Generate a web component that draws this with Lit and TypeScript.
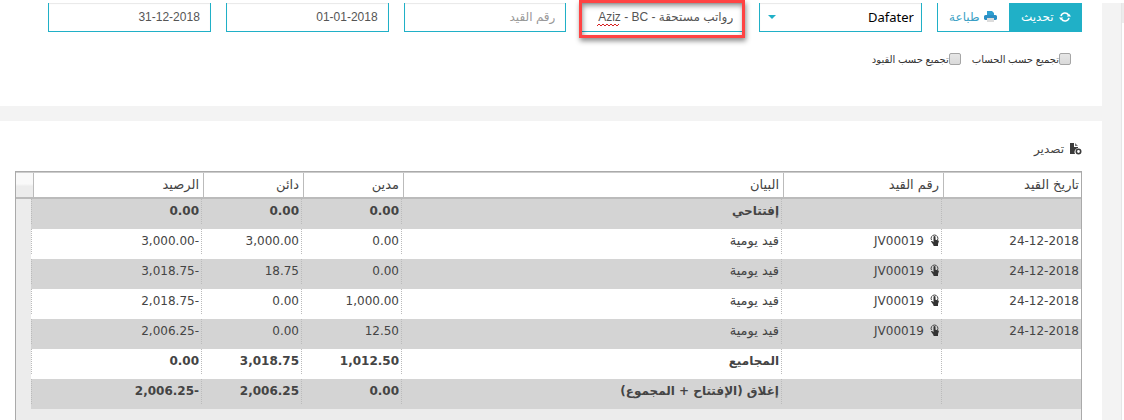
import { LitElement, html, css, svg, nothing } from "lit";
import { customElement } from "lit/decorators.js";
import { classMap } from "lit/directives/class-map.js";

interface Entry {
  date?: string;
  ref?: string;
  text: string;
  debit: string;
  credit: string;
  balance: string;
  bold?: boolean;
}

const ENTRIES: Entry[] = [
  { text: "إفتتاحي", debit: "0.00", credit: "0.00", balance: "0.00", bold: true },
  { date: "24-12-2018", ref: "JV00019", text: "قيد يومية", debit: "0.00", credit: "3,000.00", balance: "-3,000.00" },
  { date: "24-12-2018", ref: "JV00019", text: "قيد يومية", debit: "0.00", credit: "18.75", balance: "-3,018.75" },
  { date: "24-12-2018", ref: "JV00019", text: "قيد يومية", debit: "1,000.00", credit: "0.00", balance: "-2,018.75" },
  { date: "24-12-2018", ref: "JV00019", text: "قيد يومية", debit: "12.50", credit: "0.00", balance: "-2,006.25" },
  { text: "المجاميع", debit: "1,012.50", credit: "3,018.75", balance: "0.00", bold: true },
  { text: "إغلاق (الإفتتاح + المجموع)", debit: "0.00", credit: "2,006.25", balance: "-2,006.25", bold: true },
];

const HEADINGS = ["تاريخ القيد", "رقم القيد", "البيان", "مدين", "دائن", "الرصيد"];

const refreshIcon = html`<svg class="icon" width="12" height="12" viewBox="0 0 12 12" aria-hidden="true">
  ${svg`<path fill="none" stroke="currentColor" stroke-width="1.500" d="M2 5.200A4.100 4.100 0 0 1 9.500 4M10 6.800A4.100 4.100 0 0 1 2.500 8"/><path fill="currentColor" d="M7.800 5.500H12L10 2.800zM4.200 6.500H0l2 2.700z"/>`}
</svg>`;

const printIcon = html`<svg class="icon" width="13" height="12" viewBox="0 0 13 12" aria-hidden="true">
  ${svg`<path fill="#2f9fd0" d="M3 0h5l2 2v2H3z"/><path fill="#2b8fc4" d="M1.500 4h10a1.500 1.500 0 0 1 1.500 1.500V8l-1 1h-2V7H3v2H1L0 8V5.500A1.500 1.500 0 0 1 1.500 4z"/><path fill="#dcdcdc" d="M3 7h7v4H3z"/>`}
</svg>`;

const exportIcon = html`<svg class="icon" width="13" height="12" viewBox="0 0 13 12" aria-hidden="true">
  ${svg`<path fill="#3b3b3b" d="M1 0h4v4h4v1a4 4 0 0 0-3 6H1z"/><path fill="#777" d="M6 0l3 3H6z"/><circle cx="9.500" cy="8.500" r="2.200" fill="none" stroke="#3b3b3b" stroke-width="1.600"/>`}
</svg>`;

const tapIcon = html`<svg class="icon" width="9" height="12" viewBox="0 0 9 12" aria-hidden="true">
  ${svg`<path fill="none" stroke="#4a4a4a" d="M1.500 6A3.400 3.400 0 1 1 7.500 6"/><path fill="#333" d="M3.500 3a1 1 0 0 1 2 0v2.700l2.500.5c.600.200.900.500.900 1.100L8 10v2H3.500v-1L1 7.500c.5-.6 1.200-.5 1.700 0l.8.800z"/>`}
</svg>`;

@customElement("ledger-filters")
export class LedgerFilters extends LitElement {
  static styles = css`
    :host {
      display: block;
      background: #fff;
      padding: 3px 20px 38px 48px;
    }
    .fields {
      display: grid;
      grid-template-columns: 145px repeat(5, minmax(0, 1fr));
      gap: 15px;
    }
    .actions {
      display: flex;
    }
    button {
      box-sizing: border-box;
      height: 29px;
      border: 1px solid #20b0c7;
      border-top: 0;
      padding: 0;
      display: flex;
      align-items: center;
      justify-content: center;
      gap: 5px;
      flex: 1;
      font: 12px/18px "Noto Sans", "DejaVu Sans", sans-serif;
      color: #3a9fc5;
      background: #fff;
    }
    .primary {
      color: #fff;
      background: #20b0c7;
    }
    .field {
      position: relative;
    }
    .control {
      box-sizing: border-box;
      display: block;
      width: 100%;
      height: 29px;
      margin: 0;
      padding: 0 10px;
      border: 1px solid #20b0c7;
      border-top: 0;
      border-radius: 0;
      background: #fff;
      box-shadow: inset 0 1px 1px #e8e8e8;
      font: 12px/18px "Liberation Sans", "DejaVu Sans", sans-serif;
      color: #555;
      outline: 0;
    }
    .control::placeholder {
      color: #999;
      opacity: 1;
    }
    select.control {
      appearance: none;
      padding: 0 7px;
      font: 13px/18px "Noto Sans", "DejaVu Sans", sans-serif;
      color: #000;
    }
    .caret {
      position: absolute;
      left: 9px;
      top: 12px;
      border: 4px solid transparent;
      border-top-color: #20b0c7;
      border-bottom: 0;
      pointer-events: none;
    }
    .marker {
      position: absolute;
      inset: -3px -1px -6px -2px;
      border: 3px solid #ff4343;
      box-shadow: 1px 3px 5px rgba(0, 0, 0, 0.45), inset 1px 3px 5px rgba(0, 0, 0, 0.4);
      pointer-events: none;
    }
    .squiggle {
      position: absolute;
      left: 16px;
      top: 20px;
      pointer-events: none;
    }
    .options {
      display: flex;
      gap: 11px;
      padding: 18px 11px 0;
    }
    .option {
      display: flex;
      align-items: center;
      font: 10px/18px "Noto Sans", "DejaVu Sans", sans-serif;
      color: #333;
    }
    .option input {
      appearance: none;
      box-sizing: border-box;
      width: 12px;
      height: 12px;
      margin: 0;
      border: 1px solid #a5a5a5;
      border-radius: 2px;
      background: linear-gradient(#e6e6e6, #dadada);
    }
  `;

  render() {
    return html`
      <div class="fields">
        <div class="actions">
          <button class="primary" type="button">${refreshIcon}<span>تحديث</span></button>
          <button type="button">${printIcon}<span>طباعة</span></button>
        </div>
        <div class="field">
          <select class="control" aria-label="الشركة"><option>Dafater</option></select>
          <span class="caret"></span>
        </div>
        <div class="field">
          <input class="control" aria-label="الحساب" .value=${"رواتب مستحقة - Aziz - BC"} />
          <svg class="squiggle" width="23" height="4" viewBox="0 0 23 4" aria-hidden="true">
            <path fill="none" stroke="#d81e1e" d="M0 3l2-2 2 2 2-2 2 2 2-2 2 2 2-2 2 2 2-2 2 2 2-2" />
          </svg>
          <span class="marker"></span>
        </div>
        <div class="field"><input class="control" aria-label="رقم القيد" placeholder="رقم القيد" /></div>
        <div class="field"><input class="control" aria-label="من تاريخ" .value=${"01-01-2018"} /></div>
        <div class="field"><input class="control" aria-label="إلى تاريخ" .value=${"31-12-2018"} /></div>
      </div>
      <div class="options">
        <label class="option"><input type="checkbox" />تجميع حسب الحساب</label>
        <label class="option"><input type="checkbox" />تجميع حسب القيود</label>
      </div>
    `;
  }
}

@customElement("ledger-table")
export class LedgerTable extends LitElement {
  static styles = css`
    :host {
      display: flex;
      flex-direction: column;
      background: #fff;
      padding: 18px 20px 0 15px;
    }
    .export {
      align-self: flex-start;
      display: flex;
      align-items: center;
      gap: 5px;
      height: 20px;
      margin-bottom: 12px;
      padding: 0;
      border: 0;
      background: none;
      font: 12px/20px "Noto Sans", "DejaVu Sans", sans-serif;
      color: #444;
    }
    table {
      flex: 1;
      display: block;
      border: 1px solid #aaa;
      border-bottom: 0;
      background: #ececec;
      font: 12px/18px "DejaVu Sans", sans-serif;
      color: #444;
    }
    thead,
    tbody {
      display: block;
    }
    tr {
      display: grid;
      grid-template-columns: 140px 160px minmax(0, 1fr) 100px 100px 170px;
    }
    thead tr {
      grid-template-columns: 138px 160px minmax(0, 1fr) 100px 100px 170px 17px;
      border-top: 1px solid #ccc;
      border-bottom: 2px solid #bbb;
      background: #fff;
    }
    th {
      padding: 3px 4px 3px 0;
      border-left: 1px solid #bbb;
      text-align: right;
      font-size: 13px;
      font-weight: 400;
    }
    th:first-child {
      padding-right: 2px;
    }
    tbody {
      padding-left: 15px;
    }
    tbody tr {
      height: 30px;
      background: #fff;
    }
    tbody tr:nth-child(odd) {
      background: #d4d4d4;
    }
    td {
      height: 22px;
      padding: 3px 2px 0 0;
      border-left: 1px dotted #bbb;
      text-align: right;
      white-space: nowrap;
    }
    .corner {
      height: auto;
      padding: 0;
      border: 0;
      background: linear-gradient(#f9f9f9 45%, #ececec 55%);
    }
    .entry .text {
      font-size: 13px;
    }
    .icon {
      vertical-align: -1px;
    }
    td .icon {
      margin-left: 6px;
    }
    .bold {
      font-weight: 700;
    }
  `;

  render() {
    return html`
      <button class="export" type="button">${exportIcon}<span>تصدير</span></button>
      <table>
        <thead>
          <tr>
            ${HEADINGS.map((h) => html`<th scope="col">${h}</th>`)}
            <td class="corner"></td>
          </tr>
        </thead>
        <tbody>
          ${ENTRIES.map(
            (e) => html`<tr class=${classMap({ bold: !!e.bold, entry: !e.bold })}>
              <td>${e.date ?? nothing}</td>
              <td>${e.ref ? html`${tapIcon}${e.ref}` : nothing}</td>
              <td class="text">${e.text}</td>
              <td>${e.debit}</td>
              <td>${e.credit}</td>
              <td>${e.balance}</td>
            </tr>`
          )}
        </tbody>
      </table>
    `;
  }
}

@customElement("app-root")
export class AppRoot extends LitElement {
  static styles = css`
    :host {
      display: flex;
      direction: ltr;
      min-height: 100vh;
      background: #f3f3f3;
    }
    .page {
      flex: 1;
      direction: rtl;
      display: flex;
      flex-direction: column;
      gap: 15px;
    }
    ledger-table {
      flex: 1;
    }
    .gutter {
      width: 22px;
      box-sizing: border-box;
      border-top: 3px solid #fff;
      display: flex;
      justify-content: flex-end;
    }
    .track {
      width: 2px;
      border-left: 1px solid #e6e6e6;
      background: #fff;
    }
    .thumb {
      height: 20px;
      background: #ececec;
    }
  `;

  render() {
    return html`
      <main class="page">
        <ledger-filters></ledger-filters>
        <ledger-table></ledger-table>
      </main>
      <div class="gutter"><div class="track"><div class="thumb"></div></div></div>
    `;
  }
}
